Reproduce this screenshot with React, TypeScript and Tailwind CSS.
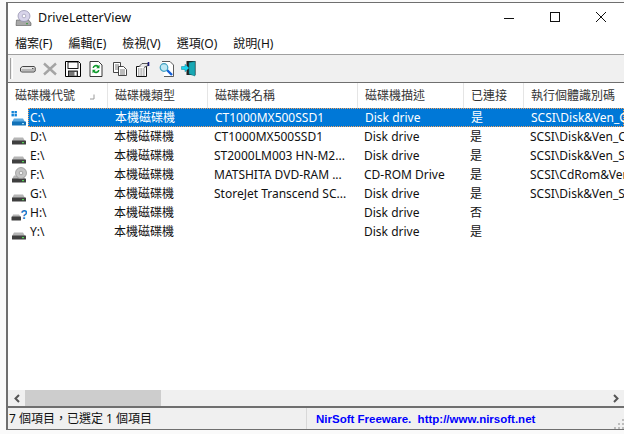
import React from "react";

const FONT = "font-['Noto_Sans','Noto_Sans_CJK_TC',sans-serif]";

const columns = [
  { title: "磁碟機代號", width: "w-[100px]" },
  { title: "磁碟機類型", width: "w-[100px]" },
  { title: "磁碟機名稱", width: "w-[150px]" },
  { title: "磁碟機描述", width: "w-[106px]" },
  { title: "已連接", width: "w-[60px]" },
  { title: "執行個體識別碼", width: "w-[100px]" },
];

type Kind = "system" | "disk" | "cd" | "missing";

const rows: { kind: Kind; cells: string[] }[] = [
  { kind: "system", cells: ["C:\\", "本機磁碟機", "CT1000MX500SSD1", "Disk drive", "是", "SCSI\\Disk&Ven_CT1000"] },
  { kind: "disk", cells: ["D:\\", "本機磁碟機", "CT1000MX500SSD1", "Disk drive", "是", "SCSI\\Disk&Ven_CT1000"] },
  { kind: "disk", cells: ["E:\\", "本機磁碟機", "ST2000LM003 HN-M2...", "Disk drive", "是", "SCSI\\Disk&Ven_ST2000"] },
  { kind: "cd", cells: ["F:\\", "本機磁碟機", "MATSHITA DVD-RAM ...", "CD-ROM Drive", "是", "SCSI\\CdRom&Ven_MA"] },
  { kind: "disk", cells: ["G:\\", "本機磁碟機", "StoreJet Transcend SC...", "Disk drive", "是", "SCSI\\Disk&Ven_StoreJ"] },
  { kind: "missing", cells: ["H:\\", "本機磁碟機", "", "Disk drive", "否", ""] },
  { kind: "disk", cells: ["Y:\\", "本機磁碟機", "", "Disk drive", "是", ""] },
];

const DriveBody = ({ blue = false }: { blue?: boolean }) => (
  <>
    <path d="M3 9.5h9l2 3.5H1z" fill={blue ? "#5aa9e0" : "#b5b5b5"} />
    <rect x="1" y="12.5" width="14" height="4" rx="0.5" fill={blue ? "#1272b8" : "#3f3f3f"} />
    <rect x="11" y="14" width="2" height="1.2" fill={blue ? "#9fe0ff" : "#52d452"} />
  </>
);

const DriveIcon = ({ kind }: { kind: Kind }) => (
  <svg width="16" height="18" viewBox="0 0 16 18" className="shrink-0">
    {kind === "system" && (
      <>
        <rect x="0.5" y="2" width="2.4" height="2.4" fill="#1283d8" />
        <rect x="3.5" y="2" width="2.4" height="2.4" fill="#1283d8" />
        <rect x="0.5" y="5" width="2.4" height="2.4" fill="#1283d8" />
        <rect x="3.5" y="5" width="2.4" height="2.4" fill="#1283d8" />
        <DriveBody blue />
      </>
    )}
    {kind === "disk" && <DriveBody />}
    {kind === "cd" && (
      <>
        <DriveBody />
        <circle cx="10" cy="7" r="5.5" fill="#c4c4c4" stroke="#8c8c8c" strokeWidth="0.7" />
        <circle cx="10" cy="7" r="1.8" fill="#f2f2f2" stroke="#8c8c8c" strokeWidth="0.7" />
      </>
    )}
    {kind === "missing" && (
      <>
        <path d="M2 10.5h6l2 2.5H1z" fill="#b5b5b5" />
        <rect x="0.5" y="12.5" width="9.5" height="4" rx="0.5" fill="#3f3f3f" />
        <text x="9.5" y="14.5" fontSize="12" fontWeight="700" fill="#1b78c8" fontFamily="Liberation Sans, sans-serif">?</text>
      </>
    )}
  </svg>
);

const AppIcon = () => (
  <svg width="18" height="18" viewBox="0 0 18 18">
    <path d="M1.5 11h12l2.5 3v2.5H1z" fill="#a8a8a8" stroke="#555" strokeWidth="0.6" />
    <ellipse cx="9" cy="7" rx="6" ry="5.5" fill="#d8d4ea" stroke="#8d8aa8" strokeWidth="0.7" />
    <circle cx="9" cy="7" r="1.8" fill="#fff" stroke="#8d8aa8" strokeWidth="0.6" />
    <rect x="11" y="14.2" width="2" height="1" fill="#3a9a3a" />
  </svg>
);

const ToolbarIcons = () => (
  <div className="flex items-center h-full">
    <svg width="16" height="16" viewBox="0 0 16 16" className="ml-[2px]">
      <path d="M2.5 5.5h11.5l1.2 1v3.5l-1 1H1.5l-1-1V7z" fill="#e4e4e4" stroke="#333" strokeWidth="0.9" />
      <path d="M1.5 9h13" stroke="#8a8a8a" strokeWidth="1" />
      <rect x="12" y="7" width="1.5" height="1" fill="#555" />
    </svg>
    <svg width="16" height="16" viewBox="0 0 16 16" className="ml-[6px]">
      <path d="M2 2.5l12 11M14 2.5l-12 11" stroke="#a4a4a4" strokeWidth="2.4" />
    </svg>
    <svg width="16" height="16" viewBox="0 0 16 16" className="ml-[7px]">
      <path d="M0.5 0.5h13l2 2v13H0.5z" fill="#fff" stroke="#000" />
      <rect x="3" y="1" width="10" height="6.5" fill="#fff" stroke="#000" strokeWidth="0.9" />
      <rect x="3.5" y="10" width="9" height="5.5" fill="#777" stroke="#000" strokeWidth="0.8" />
      <rect x="9.5" y="11" width="2" height="3.5" fill="#fff" />
    </svg>
    <svg width="14" height="16" viewBox="0 0 14 16" className="ml-[8px]">
      <path d="M1 0.5h8.5l3.5 3.5v11.5H1z" fill="#fff" stroke="#222" strokeWidth="0.9" />
      <path d="M3.5 7a3.5 3.5 0 0 1 6-2.2l1-1v3.4H7.200l1.200-1.100A2 2 0 0 0 5 7z" fill="#0f9a2c" />
      <path d="M10.500 9a3.500 3.500 0 0 1-6 2.200l-1 1V8.800h3.300L5.600 9.900A2 2 0 0 0 9 9z" fill="#0f9a2c" />
    </svg>
    <svg width="16" height="16" viewBox="0 0 16 16" className="ml-[9px]">
      <path d="M1.500 1.500h7v10h-7z" fill="#fff" stroke="#333" strokeWidth="0.9" />
      <path d="M3 4h4M3 6h4M3 8h4" stroke="#555" strokeWidth="0.8" />
      <path d="M6.500 5.500h5l3 3v6h-8z" fill="#fff" stroke="#333" strokeWidth="0.9" />
      <path d="M8 9h5M8 11h5M8 13h5" stroke="#555" strokeWidth="0.8" />
    </svg>
    <svg width="16" height="16" viewBox="0 0 16 16" className="ml-[7px]">
      <path d="M1.500 5.500h10v10h-10z" fill="#fff" stroke="#111" />
      <path d="M3 8h7M3 10h7M3 12h7M3 14h7" stroke="#444" strokeWidth="0.8" strokeDasharray="1 0.6" />
      <path d="M4 5.500l3-3h6v2l-4 2" fill="#e8e8e8" stroke="#333" strokeWidth="0.8" />
      <path d="M13.500 1v4" stroke="#1a1a7a" strokeWidth="1.600" />
    </svg>
    <svg width="16" height="16" viewBox="0 0 16 16" className="ml-[8px]">
      <path d="M3 0.500h8l3.500 3.500v11.500H5" fill="#fff" stroke="#333" strokeWidth="0.8" />
      <path d="M7.500 8.500l5.500 5.500" stroke="#1460d8" strokeWidth="2.400" />
      <circle cx="5" cy="6.500" r="3.800" fill="#bfe8f4" stroke="#3f9fc0" strokeWidth="1.200" />
    </svg>
    <svg width="16" height="17" viewBox="0 0 16 17" className="ml-[6px]">
      <path d="M5.500 1h9v14h-9z" fill="#222" />
      <path d="M8 2.500l6 -1v14.500l-6-2z" fill="#18a8b4" stroke="#0b6e78" strokeWidth="0.5" />
      <path d="M0.500 6.500h3.500V4.200L8 8l-4 3.800V9.500H0.500z" fill="#19d4f0" stroke="#0a7f96" strokeWidth="0.5" />
    </svg>
  </div>
);

export default function App() {
  return (
    <div className={`${FONT} w-[624px] h-[434px] overflow-hidden bg-[#fafafa] pt-[2px] pl-[6px] pb-[4px] text-[12px] leading-[16px] text-black`}>
      <div className="flex flex-col h-full bg-white border-t border-l-2 border-b border-[#6f6f6f]">
        {/* title bar */}
        <div className="flex items-center h-[30px] shrink-0 pl-[7px]">
          <AppIcon />
          <span className="ml-[5px] text-[12.5px] text-[#111]">DriveLetterView</span>
          <div className="ml-auto flex items-center">
            <svg width="46" height="30" viewBox="0 0 46 30">
              <path d="M18 15.500h10" stroke="#111" />
            </svg>
            <svg width="46" height="30" viewBox="0 0 46 30">
              <rect x="18.500" y="9.500" width="9" height="9" fill="none" stroke="#111" />
            </svg>
            <svg width="46" height="30" viewBox="0 0 46 30">
              <path d="M18 9l10 10M28 9L18 19" stroke="#111" />
            </svg>
          </div>
        </div>
        {/* menu */}
        <div className="flex items-center h-[21px] shrink-0 pl-[7px] gap-[16px] text-[#111] bg-white">
          <span>檔案(F)</span>
          <span>編輯(E)</span>
          <span>檢視(V)</span>
          <span>選項(O)</span>
          <span>說明(H)</span>
        </div>
        {/* toolbar */}
        <div className="flex items-center h-[29px] shrink-0 bg-[#f0f0f0] border-t border-b border-t-[#a0a0a0] border-b-[#6f6f6f] pl-[2px]">
          <div className="w-px h-[21px] bg-[#a0a0a0] mr-[1px]" />
          <div className="w-px h-[21px] bg-white mr-[5px]" />
          <ToolbarIcons />
        </div>
        {/* list header */}
        <div className="flex h-[25px] shrink-0 bg-white text-[#333]">
          {columns.map((col, i) => (
            <div
              key={col.title}
              className={`${col.width} shrink-0 flex items-center pl-[7px] border-r border-[#e5e5e5] relative ${i === 5 ? "border-r-0" : ""}`}
            >
              <span className="whitespace-nowrap">{col.title}</span>
              {i === 0 && (
                <svg width="7" height="7" viewBox="0 0 7 7" className="absolute left-[81px] top-[10px]">
                  <path d="M1 6h4V1.500" fill="none" stroke="#9a9a9a" />
                </svg>
              )}
            </div>
          ))}
        </div>
        {/* rows */}
        <div className="flex-1 min-h-0 overflow-hidden">
          {rows.map((row, rowIndex) => {
            const selected = rowIndex === 0;
            return (
              <div key={row.cells[0]} className="flex h-[19px] items-center pl-[3px]">
                <DriveIcon kind={row.kind} />
                <div
                  className={`flex flex-1 h-[19px] items-center ml-[1px] min-w-0 ${
                    selected ? "bg-[#0078d7] text-white border border-dotted border-[#f4a460]" : "text-[#111]"
                  }`}
                >
                  <div className={`w-[80px] shrink-0 ${selected ? "pl-[1px]" : "pl-[2px]"}`}>{row.cells[0]}</div>
                  {row.cells.slice(1).map((cell, i) => (
                    <div
                      key={i}
                      className={`${["w-[100px]", "w-[150px]", "w-[106px]", "w-[60px]", "w-[100px]"][i]} shrink-0 pl-[6px] whitespace-nowrap overflow-hidden`}
                    >
                      {cell}
                    </div>
                  ))}
                </div>
              </div>
            );
          })}
        </div>
        {/* horizontal scrollbar */}
        <div className="flex items-center h-[16px] shrink-0 bg-[#f0f0f0]">
          <div className="w-[17px] flex justify-center">
            <svg width="8" height="9" viewBox="0 0 8 9">
              <path d="M6 1L2.500 4.500 6 8" fill="none" stroke="#555" strokeWidth="2" />
            </svg>
          </div>
          <div className="w-[136px] h-full bg-[#cdcdcd]" />
          <div className="ml-auto w-[17px] flex justify-center">
            <svg width="8" height="9" viewBox="0 0 8 9">
              <path d="M2 1l3.500 3.500L2 8" fill="none" stroke="#555" strokeWidth="2" />
            </svg>
          </div>
        </div>
        {/* status bar */}
        <div className="flex items-center h-[23px] shrink-0 bg-[#f0f0f0] border-t-2 border-[#6f6f6f] relative">
          <div className="w-[299px] h-full flex items-center pl-[1px] border-r border-[#d8d8d8] text-[#111] text-[12px] shrink-0">
            7 個項目，已選定 1 個項目
          </div>
          <span className="ml-[9px] font-['Liberation_Sans',sans-serif] font-bold text-[11.5px] text-[#0000ff] whitespace-pre">
            NirSoft Freeware.  http://www.nirsoft.net
          </span>
          <svg width="12" height="12" viewBox="0 0 12 12" className="absolute right-0 bottom-0">
            <path d="M10 2h2v2h-2zM6 6h2v2H6zM10 6h2v2h-2zM2 10h2v2H2zM6 10h2v2H6zM10 10h2v2h-2z" fill="#bdbdbd" />
          </svg>
        </div>
      </div>
    </div>
  );
}
